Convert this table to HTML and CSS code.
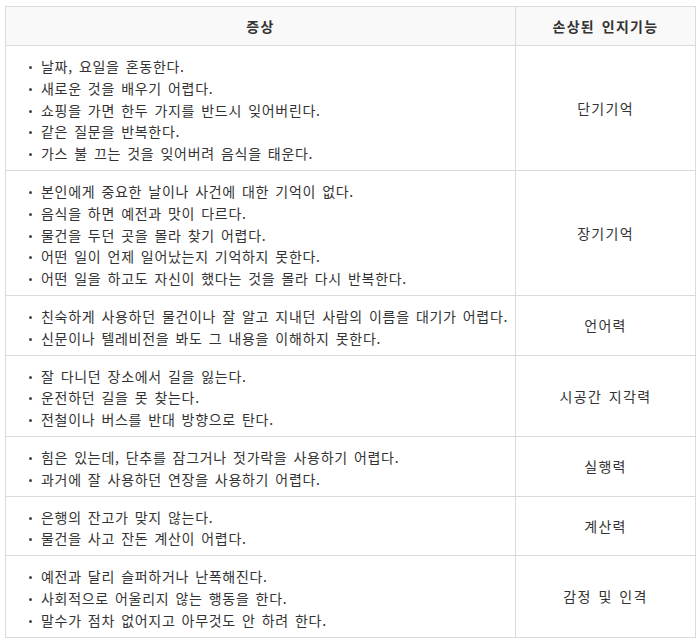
FILE: index.html
```html
<!DOCTYPE html>
<html lang="ko">
<head>
<meta charset="utf-8">
<title>치매 증상</title>
<link rel="stylesheet" href="styles.css">
</head>
<body>
<div class="wrap">
<table class="sym">
  <colgroup><col class="c1"><col class="c2"></colgroup>
  <thead>
    <tr><th>증상</th><th>손상된 인지기능</th></tr>
  </thead>
  <tbody>
    <tr>
      <td class="list"><ul>
        <li>날짜, 요일을 혼동한다.</li>
        <li>새로운 것을 배우기 어렵다.</li>
        <li>쇼핑을 가면 한두 가지를 반드시 잊어버린다.</li>
        <li>같은 질문을 반복한다.</li>
        <li>가스 불 끄는 것을 잊어버려 음식을 태운다.</li>
      </ul></td>
      <td class="fn">단기기억</td>
    </tr>
    <tr>
      <td class="list"><ul>
        <li>본인에게 중요한 날이나 사건에 대한 기억이 없다.</li>
        <li>음식을 하면 예전과 맛이 다르다.</li>
        <li>물건을 두던 곳을 몰라 찾기 어렵다.</li>
        <li>어떤 일이 언제 일어났는지 기억하지 못한다.</li>
        <li>어떤 일을 하고도 자신이 했다는 것을 몰라 다시 반복한다.</li>
      </ul></td>
      <td class="fn">장기기억</td>
    </tr>
    <tr>
      <td class="list"><ul>
        <li>친숙하게 사용하던 물건이나 잘 알고 지내던 사람의 이름을 대기가 어렵다.</li>
        <li>신문이나 텔레비전을 봐도 그 내용을 이해하지 못한다.</li>
      </ul></td>
      <td class="fn">언어력</td>
    </tr>
    <tr>
      <td class="list"><ul>
        <li>잘 다니던 장소에서 길을 잃는다.</li>
        <li>운전하던 길을 못 찾는다.</li>
        <li>전철이나 버스를 반대 방향으로 탄다.</li>
      </ul></td>
      <td class="fn">시공간 지각력</td>
    </tr>
    <tr>
      <td class="list"><ul>
        <li>힘은 있는데, 단추를 잠그거나 젓가락을 사용하기 어렵다.</li>
        <li>과거에 잘 사용하던 연장을 사용하기 어렵다.</li>
      </ul></td>
      <td class="fn">실행력</td>
    </tr>
    <tr>
      <td class="list"><ul>
        <li>은행의 잔고가 맞지 않는다.</li>
        <li>물건을 사고 잔돈 계산이 어렵다.</li>
      </ul></td>
      <td class="fn">계산력</td>
    </tr>
    <tr>
      <td class="list"><ul>
        <li>예전과 달리 슬퍼하거나 난폭해진다.</li>
        <li>사회적으로 어울리지 않는 행동을 한다.</li>
        <li>말수가 점차 없어지고 아무것도 안 하려 한다.</li>
      </ul></td>
      <td class="fn">감정 및 인격</td>
    </tr>
  </tbody>
</table>
</div>
</body>
</html>
```
FILE: styles.css
```css
html, body {
  margin: 0;
  padding: 0;
  background: #fff;
}
body {
  font-family: "Noto Sans CJK KR", "Noto Sans", sans-serif;
  font-size: 14px;
  letter-spacing: 1.3px;
  word-spacing: 1.5px;
  color: #333;
}
.wrap {
  padding: 6px 5px 0 5px;
}
.sym {
  width: 690px;
  border-collapse: collapse;
  table-layout: fixed;
}
.c1 { width: 510px; }
.c2 { width: 180px; }
.sym th, .sym td {
  border: 1px solid #d9d9de;
}
.sym th {
  height: 38px;
  padding: 0;
  background: #f9f9f9;
  font-weight: 700;
  font-size: 14px;
  text-align: center;
  vertical-align: middle;
  color: #333;
}
.sym td.list {
  padding: 10px 10px 5px 20px;
  vertical-align: top;
}
.sym ul {
  list-style: none;
  margin: 0;
  padding: 0;
}
.sym li {
  position: relative;
  line-height: 21.8px;
  padding-left: 15px;
  letter-spacing: 0.7px;
  white-space: nowrap;
}
.sym li::before {
  content: "";
  position: absolute;
  left: 3px;
  top: 10px;
  width: 3px;
  height: 3px;
  border-radius: 50%;
  background: #444;
}
.sym td.fn {
  padding: 0 10px;
  text-align: center;
  vertical-align: middle;
}
```
